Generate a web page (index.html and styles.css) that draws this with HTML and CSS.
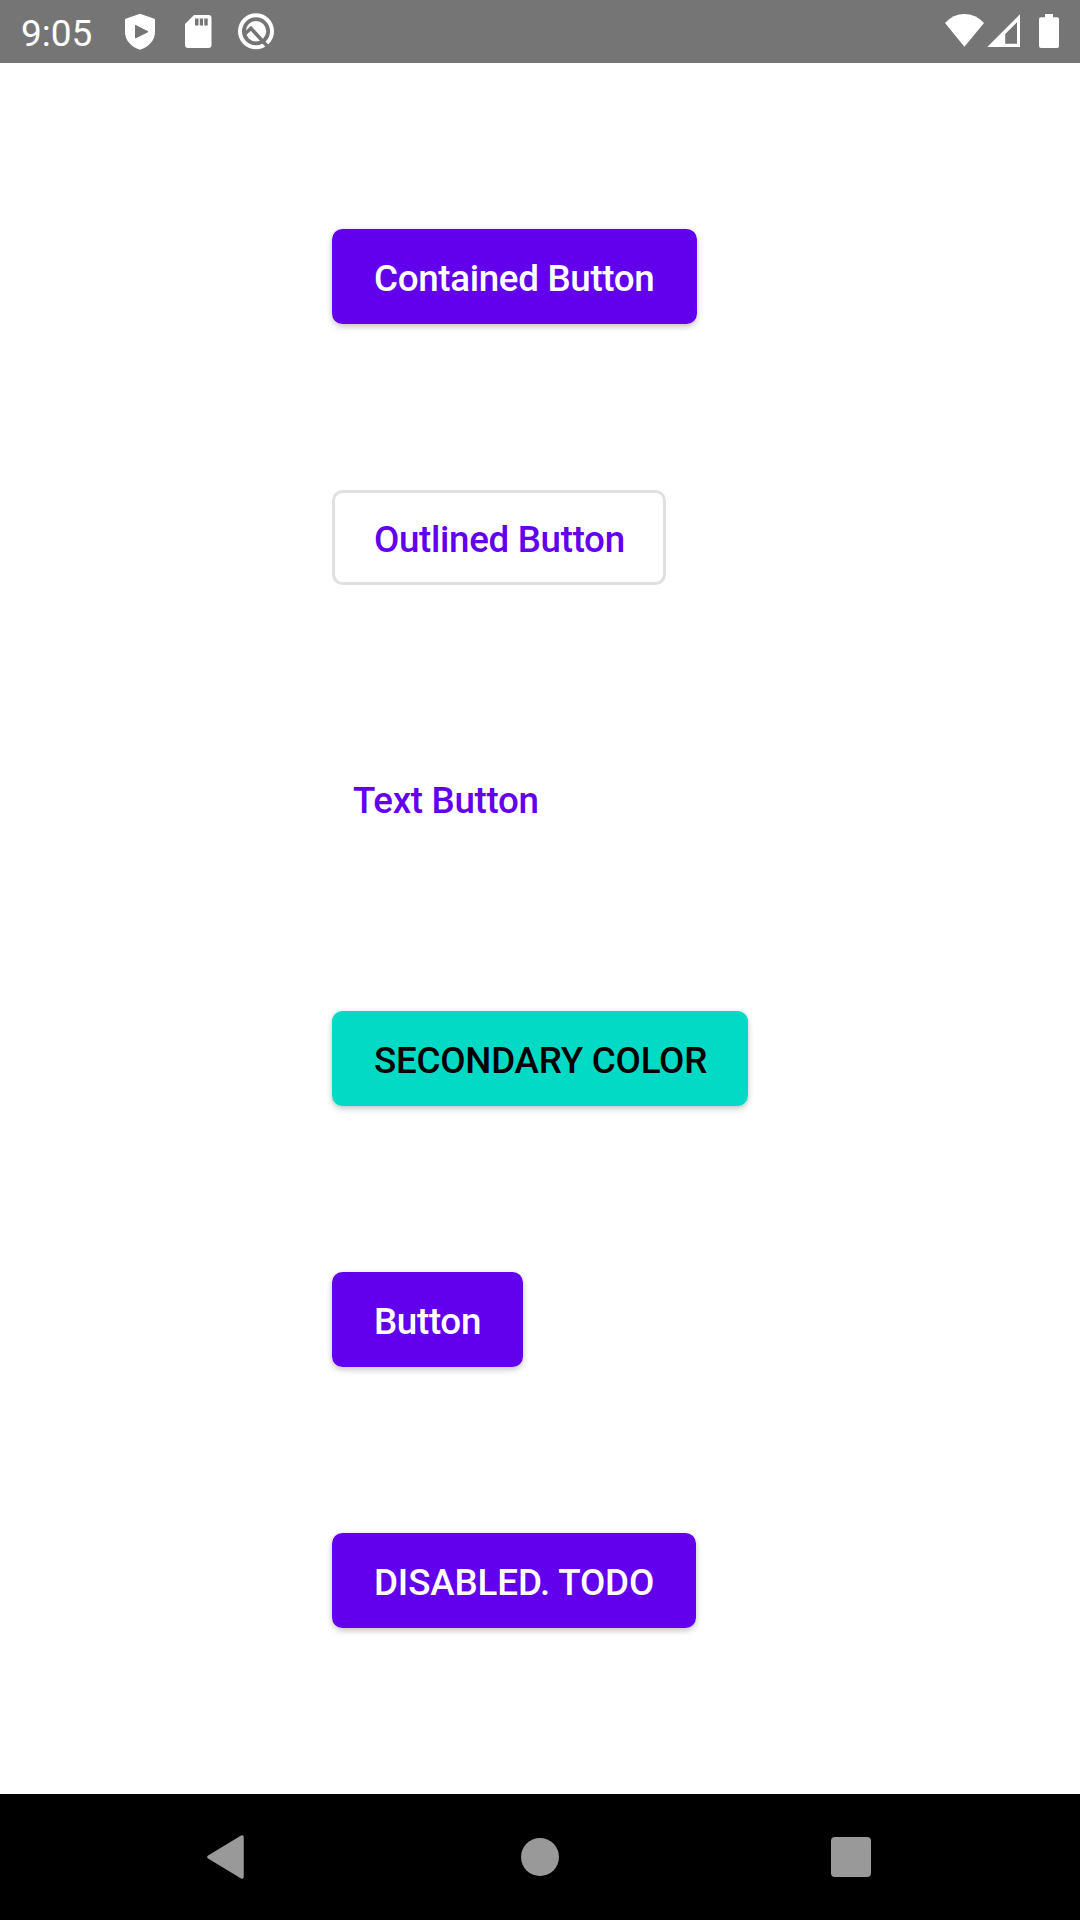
FILE: index.html
```html
<!DOCTYPE html>
<html lang="en">
<head>
<meta charset="utf-8">
<title>Buttons</title>
<link rel="stylesheet" href="styles.css">
</head>
<body>
<header class="status-bar">
  <span class="clock">9:05</span>
  <svg class="status-icons" width="160" height="63" viewBox="120 0 160 63" fill="#fff">
    <path fill-rule="evenodd" d="M140 13.7L155 19V32C155 40 149 47 140 49.7C131 47 125 40 125 32V19ZM135 25V38.3L148.5 31.7Z"/>
    <path fill="none" stroke="#757575" stroke-width="1" stroke-linejoin="round" d="M135.5 25.5V37.8L147.8 31.7Z"/>
    <path fill-rule="evenodd" d="M194 15H208.5Q211.5 15 211.5 18V45Q211.5 48 208.5 48H188Q185 48 185 45V24ZM195 18.5V25.5H198.5V18.5ZM199.8 18.5V25.5H203V18.5ZM204.3 18.5V25.5H207.7V18.5Z"/>
    <circle cx="256" cy="31.3" r="16" fill="none" stroke="#fff" stroke-width="4"/>
    <circle cx="256" cy="31.3" r="10.2"/>
    <path d="M244.5 34.3L251 28.3L267.3 46.3" fill="none" stroke="#757575" stroke-width="3.6"/>
  </svg>
  <svg class="system-icons" width="120" height="63" viewBox="940 0 120 63" fill="#fff">
    <path d="M945 23Q953 14 964.4 14T984 23L964.4 46.7Z"/>
    <path fill-rule="evenodd" d="M1020 14.3V47H987.3ZM1017 22.3L1005.2 34V43.7H1017Z"/>
    <path d="M1045 14H1053V17.3H1057Q1059 17.3 1059 19.3V46Q1059 48 1057 48H1041Q1039 48 1039 46V19.3Q1039 17.3 1041 17.3H1045Z"/>
  </svg>
</header>
<main class="button-list">
  <button class="button contained lowered wide-1">Contained Button</button>
  <button class="button outlined lowered">Outlined Button</button>
  <button class="button text lowered">Text Button</button>
  <button class="button contained secondary">SECONDARY COLOR</button>
  <button class="button contained wide-2">Button</button>
  <button class="button contained wide-3">DISABLED. TODO</button>
</main>
<nav class="nav-bar">
  <svg width="38" height="44" viewBox="0 0 38 44"><path d="M2 22L35 2V42Z" fill="#999" stroke="#999" stroke-width="3.5" stroke-linejoin="round"/></svg>
  <span class="nav-home"></span>
  <span class="nav-recents"></span>
</nav>
</body>
</html>
```
FILE: styles.css
```css
body {
  margin: 0;
  width: 1080px;
  height: 1920px;
  display: flex;
  flex-direction: column;
  background: #fff;
  font-family: Roboto, "Liberation Sans", sans-serif;
}

.status-bar {
  height: 63px;
  display: flex;
  background: #757575;
  color: #fff;
}

.clock {
  width: 99px;
  padding-left: 21px;
  font-size: 37px;
  line-height: 67px;
}

.status-icons {
  margin-left: 0;
}

.system-icons {
  margin-left: auto;
  margin-right: 20px;
}

.button-list {
  flex: 1;
  display: flex;
  flex-direction: column;
  align-items: flex-start;
  justify-content: space-evenly;
  padding-left: 332px;
}

.button {
  box-sizing: border-box;
  height: 95px;
  padding: 3px 0 0 42px;
  border: 0;
  border-radius: 10.5px;
  background: none;
  color: #6200ee;
  font-family: inherit;
  font-size: 36.75px;
  font-weight: 500;
  letter-spacing: -0.33px;
  line-height: 43px;
  text-align: left;
  white-space: nowrap;
}

.lowered {
  padding-top: 5px;
}

.contained {
  background: #6200ee;
  color: #fff;
  box-shadow: 0 3px 6px rgba(0, 0, 0, 0.2), 0 0 5px rgba(0, 0, 0, 0.06);
}

.wide-1 { width: 365px; }
.wide-2 { width: 191px; }
.wide-3 {
  width: 364px;
  letter-spacing: -0.12px;
}

.outlined {
  width: 334px;
  padding-left: 39px;
  border: 3px solid #e0e0e0;
}

.text {
  padding-left: 21px;
}

.secondary {
  width: 416px;
  background: #03dac5;
  color: #000;
  letter-spacing: -0.24px;
}

.nav-bar {
  box-sizing: border-box;
  height: 126px;
  display: flex;
  align-items: center;
  justify-content: space-between;
  padding: 0 209px 0 207px;
  background: #000;
}

.nav-home {
  width: 38px;
  height: 38px;
  margin-left: 3px;
  border-radius: 50%;
  background: #999;
}

.nav-recents {
  width: 40px;
  height: 40px;
  border-radius: 4px;
  background: #999;
}
```
